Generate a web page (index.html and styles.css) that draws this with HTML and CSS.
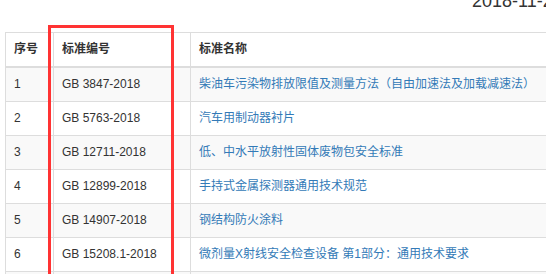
FILE: index.html
```html
<!DOCTYPE html>
<html lang="zh-CN">
<head>
<meta charset="utf-8">
<title>标准列表</title>
<link rel="stylesheet" href="styles.css">
</head>
<body>
<div class="page">
  <div class="topbar"><span class="date">2018-11-23</span></div>
  <table class="std-table">
    <colgroup>
      <col class="c-no">
      <col class="c-code">
      <col class="c-name">
    </colgroup>
    <thead>
      <tr><th>序号</th><th>标准编号</th><th>标准名称</th></tr>
    </thead>
    <tbody>
      <tr><td>1</td><td>GB 3847-2018</td><td><a href="#">柴油车污染物排放限值及测量方法（自由加速法及加载减速法）</a></td></tr>
      <tr><td>2</td><td>GB 5763-2018</td><td><a href="#">汽车用制动器衬片</a></td></tr>
      <tr><td>3</td><td>GB 12711-2018</td><td><a href="#">低、中水平放射性固体废物包安全标准</a></td></tr>
      <tr><td>4</td><td>GB 12899-2018</td><td><a href="#">手持式金属探测器通用技术规范</a></td></tr>
      <tr><td>5</td><td>GB 14907-2018</td><td><a href="#">钢结构防火涂料</a></td></tr>
      <tr><td>6</td><td>GB 15208.1-2018</td><td><a href="#">微剂量X射线安全检查设备 第1部分：通用技术要求</a></td></tr>
      <tr class="empty"><td></td><td></td><td></td></tr>
    </tbody>
  </table>
  <div class="highlight"></div>
</div>
</body>
</html>
```
FILE: styles.css
```css
html, body {
  margin: 0;
  padding: 0;
  background: #fff;
}
.page {
  position: relative;
  width: 546px;
  height: 274px;
  overflow: hidden;
  font-family: "Liberation Sans", "Noto Sans CJK SC", sans-serif;
  font-size: 12px;
  color: #333;
}
.topbar {
  display: flow-root;
  height: 32px;
  padding-left: 472px;
  white-space: nowrap;
}
.date {
  display: block;
  font-size: 18px;
  line-height: 18px;
  margin-top: -8px;
  color: #333;
}
.std-table {
  margin-left: 5px;
  border-collapse: collapse;
  table-layout: fixed;
  width: 760px;
}
.c-no { width: 48px; }
.c-code { width: 137px; }
.c-name { width: 575px; }
.std-table th,
.std-table td {
  border: 1px solid #ddd;
  padding: 8px 8px;
  line-height: 17px;
  height: 17px;
  text-align: left;
  white-space: nowrap;
  vertical-align: middle;
}
.std-table th {
  font-weight: bold;
  border-bottom: 2px solid #ddd;
}
.std-table tbody tr:nth-child(odd) td {
  background: #f9f9f9;
}
.std-table a {
  color: #337ab7;
  text-decoration: none;
}
.highlight {
  position: absolute;
  left: 48px;
  top: 25px;
  width: 126px;
  height: 320px;
  border: 3px solid #f33;
  box-sizing: border-box;
}
```
